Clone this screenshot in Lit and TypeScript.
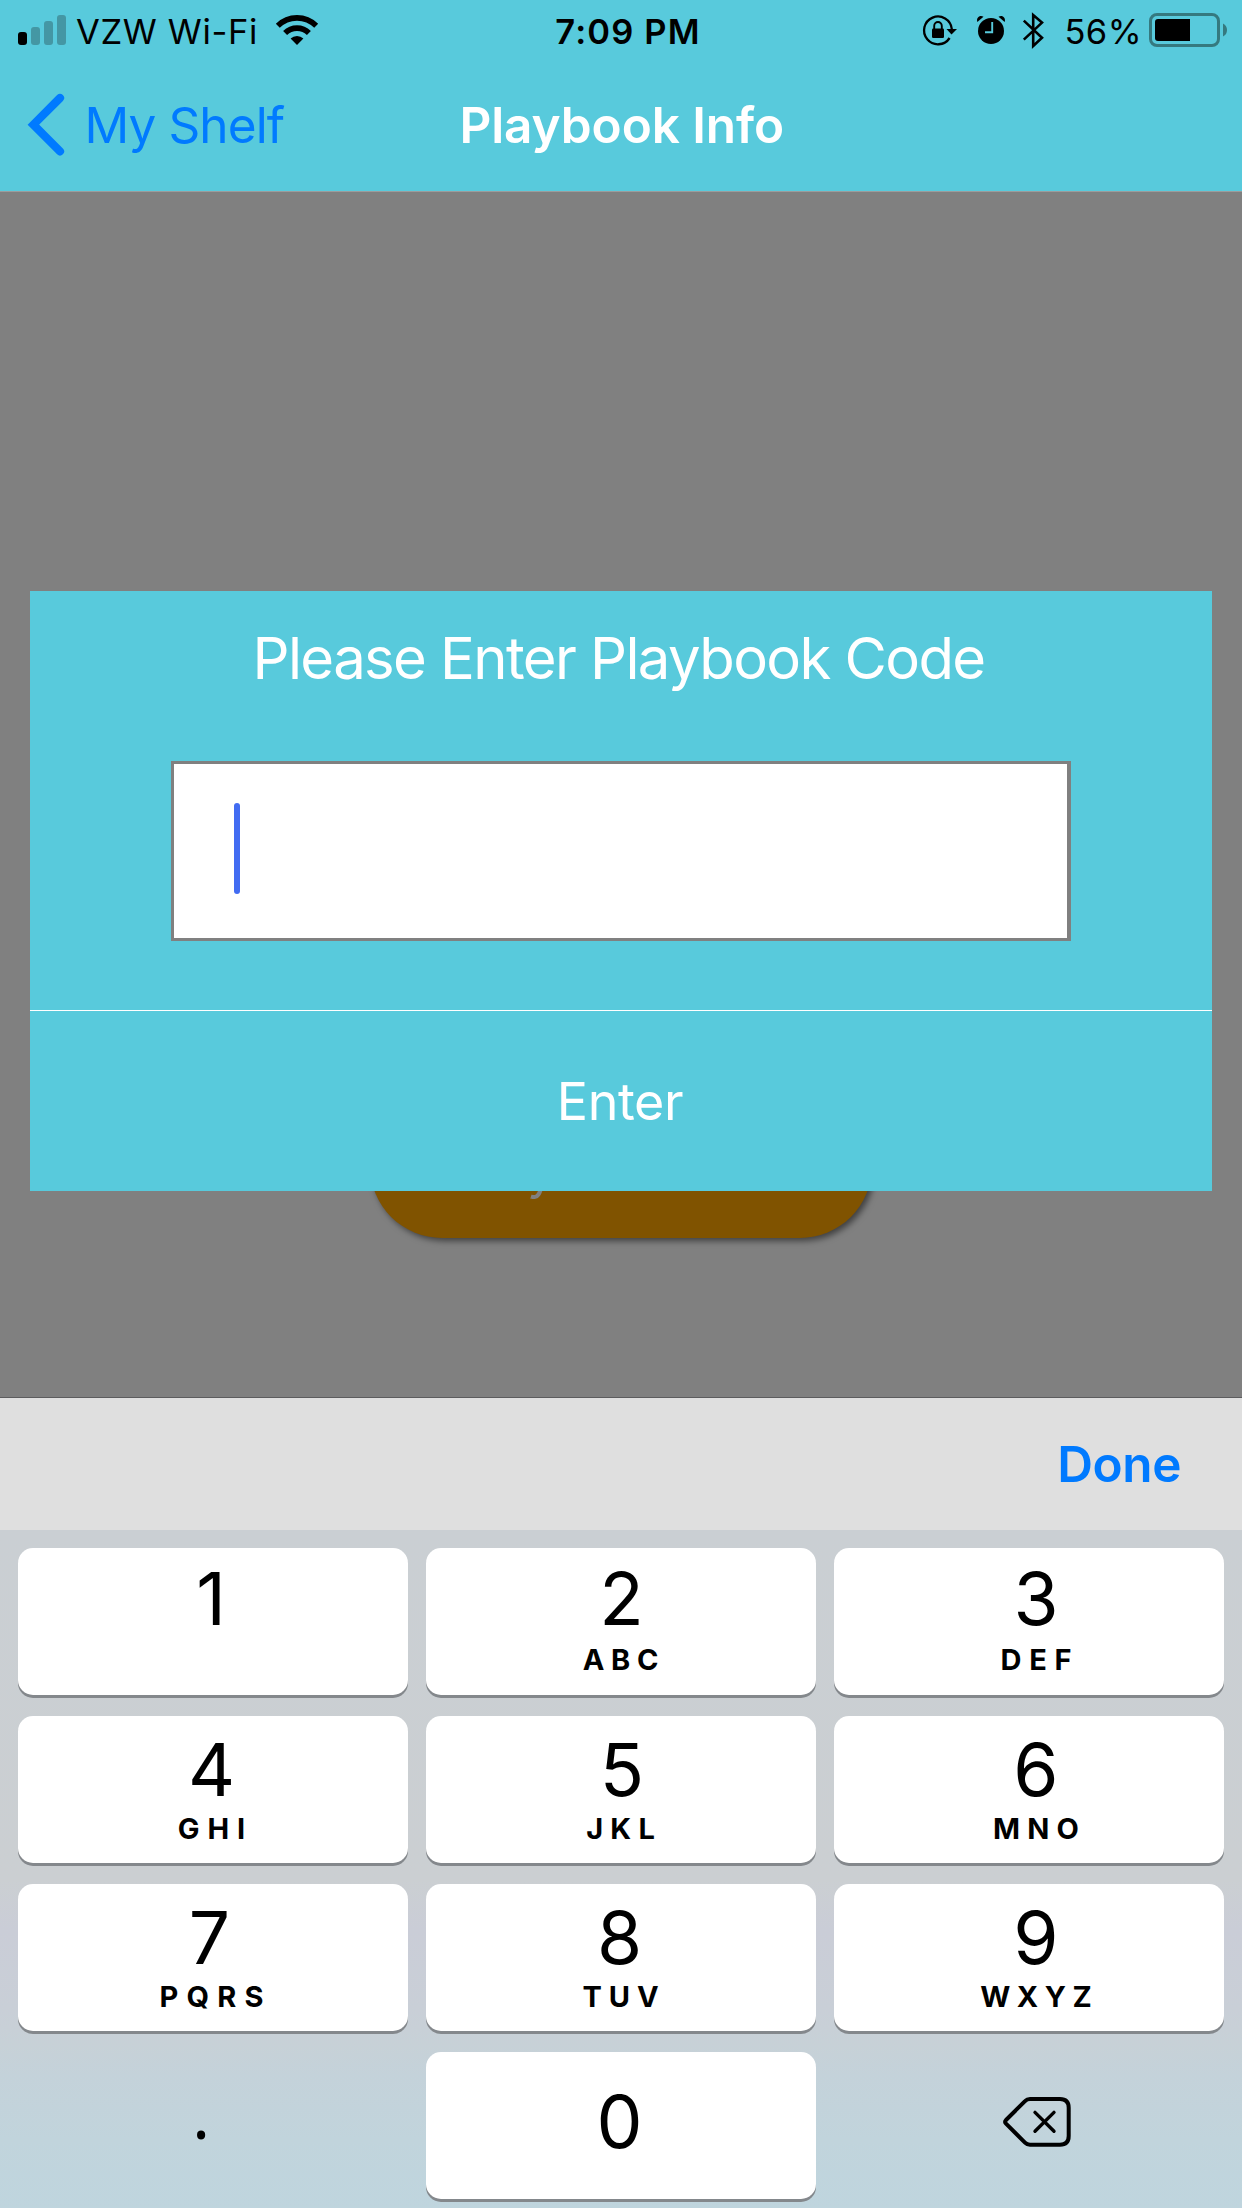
import { LitElement, html, css, nothing } from "lit";
import { customElement, property } from "lit/decorators.js";

interface Key {
  digit: string;
  letters?: string;
  /** Tracking of the letters, px. */
  track?: number;
  /** Optical correction of the digit, px. */
  nudge?: number;
}

const KEYS: Key[] = [
  { digit: "1", nudge: -0.5 },
  { digit: "2", letters: "ABC", track: 6.7, nudge: 1 },
  { digit: "3", letters: "DEF", track: 7.8 },
  { digit: "4", letters: "GHI", track: 7.9 },
  { digit: "5", letters: "JKL", track: 7.2, nudge: 1.5 },
  { digit: "6", letters: "MNO", track: 7.2 },
  { digit: "7", letters: "PQRS", track: 8.2, nudge: -2 },
  { digit: "8", letters: "TUV", track: 7, nudge: -1 },
  { digit: "9", letters: "WXYZ", track: 6.5 },
];

@customElement("status-bar")
class StatusBar extends LitElement {
  static styles = css`
    :host {
      display: grid;
      grid-template-columns: 1fr auto 1fr;
      height: 60px;
      color: #000;
      font-size: 34.5px;
      line-height: 41px;
      white-space: nowrap;
    }
    svg { display: block; flex: none; height: 60px; }
    .side { display: flex; }
    .right { justify-content: flex-end; }
    .text { padding-top: 11px; }
    .signal { width: 76px; }
    .carrier { letter-spacing: 0.65px; }
    .wifi { width: 46px; margin-left: 16px; }
    .time { margin-left: 14px; font-weight: 600; letter-spacing: 1.15px; }
    .lock { width: 40px; }
    .alarm { width: 34px; margin-left: 14px; }
    .bluetooth { width: 27px; margin: 0 17.5px 0 12px; }
    .percent { letter-spacing: 0.45px; margin-right: 4px; }
    .battery { width: 96px; }
  `;
  render() {
    return html`
      <div class="side">
        <svg class="signal" viewBox="0 0 76 60">
          <rect x="18" y="32" width="9" height="13" rx="3" />
          <g fill="#4497a4">
            <rect x="31" y="27" width="9" height="18" rx="3" />
            <rect x="44" y="21" width="9" height="24" rx="3" />
            <rect x="57" y="15" width="9" height="30" rx="3" />
          </g>
        </svg>
        <span class="text carrier">VZW Wi-Fi</span>
        <svg class="wifi" viewBox="274 0 46 60">
          <path d="M297 45L290.6 38.6A9 9 0 0 1 303.4 38.6Z" />
          <g fill="none" stroke="#000" stroke-width="5.6">
            <path d="M285.1 33.1A16.8 16.8 0 0 1 308.9 33.1" />
            <path d="M277.8 25.8A27.2 27.2 0 0 1 316.2 25.8" />
          </g>
        </svg>
      </div>
      <span class="text time">7:09 PM</span>
      <div class="side right">
        <svg class="lock" viewBox="920 0 40 60">
          <path d="M949.6 38A13.9 13.9 0 1 1 951.8 29" fill="none" stroke="#000" stroke-width="2.3" />
          <path d="M946.5 29H957L951.5 34.5Z" />
          <rect x="932" y="28.5" width="12" height="9.5" rx="1.2" />
          <path d="M934.2 30V26A3.8 4 0 0 1 941.8 26V30" fill="none" stroke="#000" stroke-width="1.9" />
        </svg>
        <svg class="alarm" viewBox="974 0 34 60">
          <circle cx="991" cy="31" r="13" />
          <path d="M992.2 22V32.3H985" fill="none" stroke="#58cadc" stroke-width="1.9" />
          <path d="M977.3 22C976 17.5 980 14.5 983.5 16.8Z" />
          <path d="M1004.7 22C1006 17.5 1002 14.5 998.5 16.8Z" />
        </svg>
        <svg class="bluetooth" viewBox="1020 0 27 60">
          <path d="M1023.8 20.6L1042 37.8L1033.2 46V15L1042 22.6L1023.8 39.6" fill="none" stroke="#000" stroke-width="2.6" />
        </svg>
        <span class="text percent">56%</span>
        <svg class="battery" viewBox="1146 0 96 60">
          <rect x="1150.5" y="14.5" width="68" height="31" rx="6.5" fill="none" stroke="#35797f" stroke-width="3" />
          <path d="M1190 19V41H1158Q1155 41 1155 38V22Q1155 19 1158 19Z" />
          <path d="M1223 23.5Q1227 25.5 1227 30Q1227 34.5 1223 36.5Z" fill="#35797f" />
        </svg>
      </div>
    `;
  }
}

@customElement("nav-bar")
class NavBar extends LitElement {
  static styles = css`
    :host {
      display: grid;
      grid-template-columns: 1fr auto 1fr;
      height: 131px;
      font-size: 49.5px;
      line-height: 60px;
      white-space: nowrap;
    }
    .back { display: flex; color: #007aff; letter-spacing: -0.9px; }
    .chevron { display: block; width: 84.5px; height: 131px; }
    .text { padding-top: 35px; }
    .title { margin-left: 1.5px; color: #fff; font-weight: 600; letter-spacing: -0.08px; }
  `;
  render() {
    return html`
      <div class="back">
        <svg class="chevron" viewBox="0 60 84.5 131">
          <path d="M60 98L33.4 124.7L60 151.4" fill="none" stroke="#007aff" stroke-width="8.2" stroke-linecap="round" />
        </svg>
        <span class="text">My Shelf</span>
      </div>
      <span class="text title">Playbook Info</span>
    `;
  }
}

@customElement("code-dialog")
class CodeDialog extends LitElement {
  static styles = css`
    :host {
      display: flex;
      flex-direction: column;
      box-sizing: border-box;
      height: 600px;
      background: #58cadc;
      color: #fff;
      text-align: center;
      white-space: nowrap;
    }
    .title {
      margin: 32px 5px 68px 0;
      font-size: 58px;
      line-height: 70px;
      letter-spacing: -1.6px;
    }
    .field {
      box-sizing: border-box;
      width: 900px;
      height: 180px;
      margin-left: 141px;
      padding: 39px 60px;
      border: 3px solid #808080;
      border-right-width: 4px;
      background: #fff;
    }
    .caret { width: 6px; height: 91px; border-radius: 3px; background: #426cf2; }
    .enter {
      margin-top: 69px;
      padding: 59px 2px 58px 0;
      border-top: 1px solid #fff;
      font-size: 52px;
      line-height: 63px;
      letter-spacing: -0.4px;
    }
  `;
  render() {
    return html`
      <div class="title">Please Enter Playbook Code</div>
      <div class="field"><div class="caret"></div></div>
      <div class="enter">Enter</div>
    `;
  }
}

@customElement("number-key")
class NumberKey extends LitElement {
  static styles = css`
    :host {
      display: flex;
      flex-direction: column;
      align-items: center;
      box-sizing: border-box;
      height: 147px;
      padding-top: 17px;
      border-radius: 15px;
      background: #fff;
      box-shadow: 0 3px 0 #84888c;
      color: #000;
    }
    :host([top]) { padding-top: 14px; }
    :host([top]) .letters { margin-top: 7px; }
    .digit { font-size: 73px; line-height: 73px; }
    .letters { margin-top: 5px; font-size: 29px; line-height: 35px; font-weight: 700; }
  `;
  @property({ attribute: false }) key!: Key;
  render() {
    const { digit, letters, track = 0, nudge = 0 } = this.key;
    return html`
      <span class="digit" style="margin-left:${nudge * 2}px">${digit}</span>
      ${letters
        ? html`<span class="letters" style="letter-spacing:${track}px;margin-right:${-track}px">${letters}</span>`
        : nothing}
    `;
  }
}

@customElement("number-pad")
class NumberPad extends LitElement {
  static styles = css`
    :host {
      display: grid;
      grid-template-columns: repeat(3, 1fr);
      grid-auto-rows: 147px;
      gap: 21px 18px;
      box-sizing: border-box;
      height: 678px;
      padding: 18px;
      background: linear-gradient(#cacfd3 0, #cbcfd2 350px, #cacdd7 400px, #c9cfd7 480px, #c7d1d7 515px, #c4d2da 545px, #c1d4dc 610px, #bfd5de 678px);
    }
    number-key:nth-of-type(3n + 1) { padding-right: 3px; }
    number-key:nth-of-type(3n + 2) { padding-right: 1px; }
    number-key:nth-of-type(3n) { padding-left: 14px; }
    number-key.zero { padding: 33px 1px 0 0; }
    .point {
      padding: 16px 24px 0 0;
      font: 66px/90px "Noto Sans", sans-serif;
      text-align: center;
      color: #000;
    }
    .erase { padding: 45px 0 0 169px; }
    .erase svg { display: block; width: 68px; height: 50px; }
  `;
  render() {
    return html`
      ${KEYS.map((k, i) => html`<number-key ?top=${i < 3} .key=${k}></number-key>`)}
      <div class="point">.</div>
      <number-key class="zero" .key=${{ digit: "0", nudge: -1 }}></number-key>
      <div class="erase">
        <svg viewBox="0 0 68 50" fill="none" stroke="#000" stroke-linecap="round" stroke-linejoin="round">
          <path stroke-width="4" d="M27 2H57Q65.7 2 65.7 10.7V39Q65.7 47.7 57 47.7H27Q24 47.7 22 45.6L3 26.7Q1.3 24.9 3 23L22 4.1Q24 2 27 2Z" />
          <path stroke-width="3.4" d="M32 15.4L51 34.2M51 15.4L32 34.2" />
        </svg>
      </div>
    `;
  }
}

@customElement("app-root")
class AppRoot extends LitElement {
  static styles = css`
    :host {
      display: flex;
      flex-direction: column;
      width: 1242px;
      height: 2208px;
      overflow: hidden;
      background: #808080;
      font-family: Inter, "Liberation Sans", sans-serif;
    }
    .top { background: #58cadc; }
    .page {
      position: relative;
      box-sizing: border-box;
      height: 1207px;
      padding: 399px 30px 0;
      border-top: 1px solid #9c9c9c;
      border-bottom: 1px solid #5c5c5e;
      background: #808080;
    }
    .dialog { position: relative; z-index: 1; }
    .action {
      position: absolute;
      top: 902px;
      left: 370px;
      box-sizing: border-box;
      width: 502px;
      height: 144px;
      padding: 47px 0 0 157px;
      border-radius: 72px;
      background: #805300;
      box-shadow: 3px 3px 6px rgba(0, 0, 0, 0.5);
      color: #808080;
      font-size: 49.5px;
      line-height: 60px;
    }
    .tools {
      display: flex;
      align-items: center;
      justify-content: flex-end;
      height: 132px;
      padding-right: 61px;
      background: #dfdfdf;
      color: #007aff;
      font-size: 49.5px;
      font-weight: 600;
      line-height: 60px;
      letter-spacing: -0.4px;
    }
  `;
  render() {
    return html`
      <header class="top">
        <status-bar></status-bar>
        <nav-bar></nav-bar>
      </header>
      <main class="page">
        <div class="action">y</div>
        <code-dialog class="dialog"></code-dialog>
      </main>
      <div class="tools">Done</div>
      <number-pad></number-pad>
    `;
  }
}
